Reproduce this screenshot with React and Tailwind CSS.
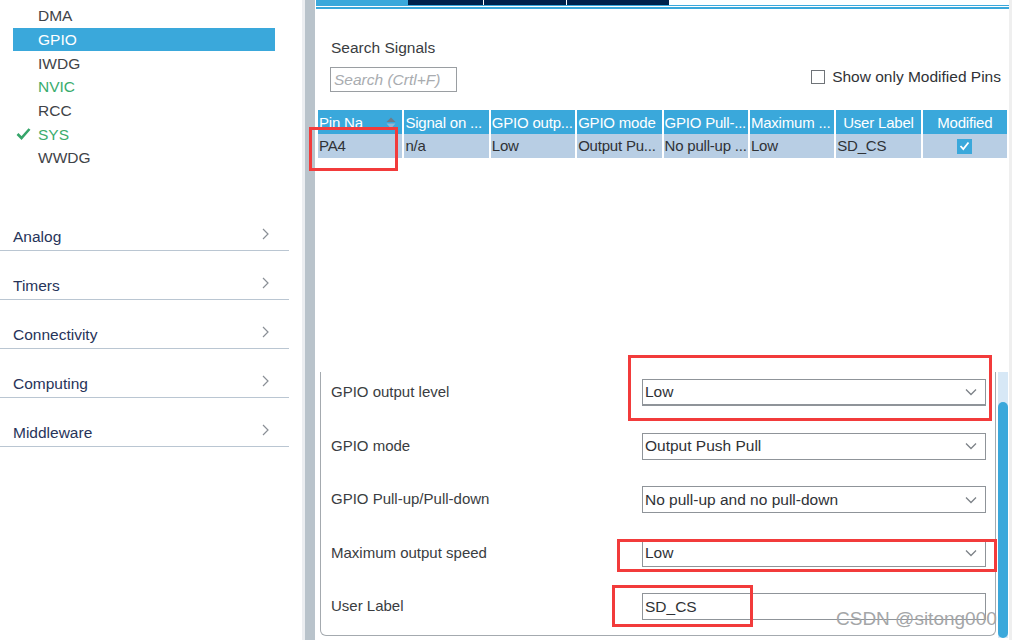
import React from 'react'

const peripherals = [
  { name: 'DMA' },
  { name: 'GPIO', selected: true },
  { name: 'IWDG' },
  { name: 'NVIC', green: true },
  { name: 'RCC' },
  { name: 'SYS', green: true, checked: true },
  { name: 'WWDG' },
]

const categories = ['Analog', 'Timers', 'Connectivity', 'Computing', 'Middleware']

const headers = ['Pin Na', 'Signal on ...', 'GPIO outp...', 'GPIO mode', 'GPIO Pull-...', 'Maximum ...', 'User Label', 'Modified']
const cells = ['PA4', 'n/a', 'Low', 'Output Pu...', 'No pull-up ...', 'Low', 'SD_CS']

const settings = [
  { label: 'GPIO output level', value: 'Low', select: true, thick: true },
  { label: 'GPIO mode', value: 'Output Push Pull', select: true },
  { label: 'GPIO Pull-up/Pull-down', value: 'No pull-up and no pull-down', select: true },
  { label: 'Maximum output speed', value: 'Low', select: true },
  { label: 'User Label', value: 'SD_CS' },
]

function Chevron() {
  return (
    <svg width="9" height="14" viewBox="0 0 9 14" className="text-[#8a8f96]">
      <polyline points="2,2 7,7 2,12" fill="none" stroke="currentColor" strokeWidth="1.2" />
    </svg>
  )
}

function DownArrow() {
  return (
    <svg width="12" height="8" viewBox="0 0 12 8" className="text-[#7d8288]">
      <polyline points="1,1.5 6,6.5 11,1.5" fill="none" stroke="currentColor" strokeWidth="1.3" />
    </svg>
  )
}

function SortIcon() {
  return (
    <svg width="10" height="12" viewBox="0 0 10 12" className="shrink-0">
      <polygon points="5,0.5 9.5,5 0.5,5" fill="#6f7c88" />
      <polygon points="0.5,6.5 9.5,6.5 5,11.5" fill="#8fb6d6" />
    </svg>
  )
}

function Sidebar() {
  return (
    <aside className="w-[302px] shrink-0 bg-white">
      <ul className="mt-[4px] ml-[13px] w-[262px] text-[15.5px]">
        {peripherals.map((p) => (
          <li
            key={p.name}
            className={
              'relative flex h-[23.7px] items-center pl-[25px] ' +
              (p.selected ? 'bg-[#3aa8db] text-white' : p.green ? 'text-[#3aac6c]' : 'text-[#3f4348]')
            }
          >
            {p.checked && (
              <svg width="15" height="13" viewBox="0 0 15 13" className="absolute left-[3px] top-[5px]">
                <path d="M1.5 7 L5.5 11 L13.5 2" fill="none" stroke="#36a56a" strokeWidth="2.6" />
              </svg>
            )}
            {p.name}
          </li>
        ))}
      </ul>

      <div className="mt-[32px] w-[289px]">
        {categories.map((c) => (
          <div key={c} className="flex h-[49px] items-end justify-between border-b border-[#bac6d2] pb-[2px] pl-[13px] pr-[19px]">
            <span className="text-[15.5px] text-[#27345a]">{c}</span>
            <span className="mb-[7px]">
              <Chevron />
            </span>
          </div>
        ))}
      </div>
    </aside>
  )
}

function PinTable() {
  return (
    <div className="mt-[18px] ml-[2px] w-[689px] text-[15px]">
      <div className="grid h-[23px] grid-cols-8 gap-x-[2px]">
        {headers.map((h, i) => (
          <div
            key={h}
            className={
              'flex items-center whitespace-nowrap bg-[#3aa8db] pt-[2px] text-white ' +
              (i >= 6 ? 'justify-center' : 'justify-between pl-[1px] pr-[6px]')
            }
          >
            <span className="tracking-[-0.2px]">{h}</span>
            {i === 0 && <SortIcon />}
          </div>
        ))}
      </div>
      <div className="mt-px grid h-[24px] grid-cols-8 gap-x-[2px]">
        {cells.map((c, i) => (
          <div key={i} className="flex items-center whitespace-nowrap bg-[#b8cee4] pl-[1px] pt-px tracking-[-0.2px] text-[#2f3236]">
            {c}
          </div>
        ))}
        <div className="flex items-center justify-center bg-[#b8cee4]">
          <span className="flex h-[15px] w-[15px] items-center justify-center bg-[#3aa8db]">
            <svg width="11" height="10" viewBox="0 0 11 10">
              <path d="M1.5 5 L4.3 8 L9.5 1.5" fill="none" stroke="white" strokeWidth="1.8" />
            </svg>
          </span>
        </div>
      </div>
    </div>
  )
}

function Settings() {
  return (
    <div className="mt-auto mb-[2px] ml-[4px] flex h-[266px]">
      <div className="flex h-[264px] w-[676px] flex-col gap-[26.5px] rounded-b-[6px] border-x border-b border-[#a4aaaf] pt-[7px] pl-[10px] pr-[9px]">
        {settings.map((s) => (
          <div key={s.label} className="flex h-[27px] items-center">
            <span className="w-[311px] text-[15px] text-[#3a3d41]">{s.label}</span>
            <div
              className={
                'flex h-[27px] w-[344px] items-center justify-between border border-[#8f9499] pl-[2px] pr-[8px] text-[15.5px] text-[#2f3236] ' +
                (s.thick ? 'border-b-2' : '')
              }
            >
              <span>{s.value}</span>
              {s.select && <DownArrow />}
            </div>
          </div>
        ))}
      </div>
      <div className="ml-[2px] flex w-[10px] flex-col bg-[#d7e8f6]">
        <div className="mt-[30px] flex-1 rounded-full bg-[#3aa8db]" />
      </div>
    </div>
  )
}

export default function App() {
  return (
    <div className="relative flex h-[640px] w-[1012px] overflow-hidden bg-white font-['Liberation_Sans',Arial,sans-serif]">
      <Sidebar />
      <div className="w-[3px] shrink-0 bg-[#eceef1]" />
      <div className="w-[10px] shrink-0 bg-[#b9c3cb]" />

      <main className="flex w-[694px] shrink-0 flex-col pl-px">
        <div className="flex h-[5px]">
          <div className="w-[92px] bg-[#3aa8db]" />
          <div className="w-[75px] bg-[#00224c]" />
          <div className="ml-px w-[82px] bg-[#00224c]" />
          <div className="ml-px w-[102px] bg-[#00224c]" />
        </div>
        <div className="h-px bg-[#3aa8db]" />
        <div className="mt-px h-[2px] bg-[#3aa8db]" />

        <div className="mt-[30px] pl-[15px] text-[15.5px] leading-[18px] text-[#3a3d41]">Search Signals</div>

        <div className="mt-[10px] flex items-start pr-[8px]">
          <div className="ml-[14px] flex h-[25px] w-[127px] items-center border border-[#9a9ea2] pl-[3px] text-[15.5px] italic text-[#a9acb0]">
            Search (Crtl+F)
          </div>
          <label className="ml-auto -mt-[2px] flex items-center gap-[7px] text-[15.5px] text-[#2f3236]">
            <span className="h-[14px] w-[14px] border border-[#6f7378] bg-white" />
            Show only Modified Pins
          </label>
        </div>

        <PinTable />
        <Settings />
      </main>

      <div className="w-[3px] shrink-0 bg-[#efefef]" />

      {/* red annotation boxes */}
      <div className="pointer-events-none absolute left-[309px] top-[127px] h-[44px] w-[89px] border-[3px] border-[#f23b3b]" />
      <div className="pointer-events-none absolute left-[628px] top-[355px] h-[66px] w-[364px] border-[3px] border-[#f23b3b]" />
      <div className="pointer-events-none absolute left-[617px] top-[539px] h-[33px] w-[380px] border-[3px] border-[#f23b3b]" />
      <div className="pointer-events-none absolute left-[612px] top-[585px] h-[42px] w-[141px] border-[3px] border-[#f23b3b]" />

      <div className="pointer-events-none absolute left-[836px] top-[608px] text-[19px] leading-[22px] text-[#a4a6a8]">
        CSDN @sitong000
      </div>
    </div>
  )
}
